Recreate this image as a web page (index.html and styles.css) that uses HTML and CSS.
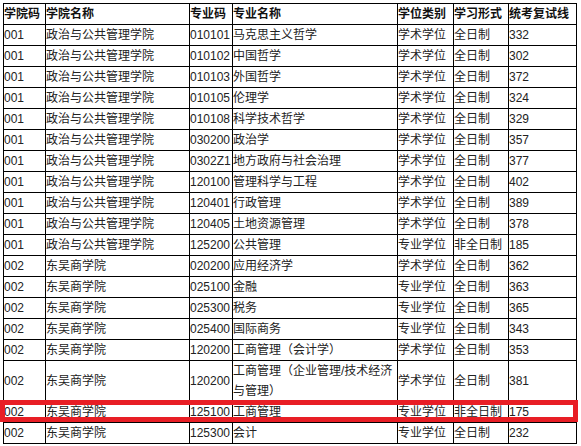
FILE: index.html
```html
<!DOCTYPE html>
<html lang="zh-CN">
<head>
<meta charset="utf-8">
<title>复试线</title>
<link rel="stylesheet" href="styles.css">
</head>
<body>
<div class="sheet">
<table class="grid">
<thead>
<tr>
<th class="c1">学院码</th><th class="c2">学院名称</th><th class="c3">专业码</th><th class="c4">专业名称</th><th class="c5">学位类别</th><th class="c6">学习形式</th><th class="c7">统考复试线</th>
</tr>
</thead>
<tbody>
<tr><td>001</td><td>政治与公共管理学院</td><td>010101</td><td>马克思主义哲学</td><td>学术学位</td><td>全日制</td><td>332</td></tr>
<tr><td>001</td><td>政治与公共管理学院</td><td>010102</td><td>中国哲学</td><td>学术学位</td><td>全日制</td><td>302</td></tr>
<tr><td>001</td><td>政治与公共管理学院</td><td>010103</td><td>外国哲学</td><td>学术学位</td><td>全日制</td><td>372</td></tr>
<tr><td>001</td><td>政治与公共管理学院</td><td>010105</td><td>伦理学</td><td>学术学位</td><td>全日制</td><td>324</td></tr>
<tr><td>001</td><td>政治与公共管理学院</td><td>010108</td><td>科学技术哲学</td><td>学术学位</td><td>全日制</td><td>329</td></tr>
<tr><td>001</td><td>政治与公共管理学院</td><td>030200</td><td>政治学</td><td>学术学位</td><td>全日制</td><td>357</td></tr>
<tr><td>001</td><td>政治与公共管理学院</td><td>0302Z1</td><td>地方政府与社会治理</td><td>学术学位</td><td>全日制</td><td>377</td></tr>
<tr><td>001</td><td>政治与公共管理学院</td><td>120100</td><td>管理科学与工程</td><td>学术学位</td><td>全日制</td><td>402</td></tr>
<tr><td>001</td><td>政治与公共管理学院</td><td>120401</td><td>行政管理</td><td>学术学位</td><td>全日制</td><td>389</td></tr>
<tr><td>001</td><td>政治与公共管理学院</td><td>120405</td><td>土地资源管理</td><td>学术学位</td><td>全日制</td><td>378</td></tr>
<tr><td>001</td><td>政治与公共管理学院</td><td>125200</td><td>公共管理</td><td>专业学位</td><td>非全日制</td><td>185</td></tr>
<tr><td>002</td><td>东吴商学院</td><td>020200</td><td>应用经济学</td><td>学术学位</td><td>全日制</td><td>362</td></tr>
<tr><td>002</td><td>东吴商学院</td><td>025100</td><td>金融</td><td>专业学位</td><td>全日制</td><td>363</td></tr>
<tr><td>002</td><td>东吴商学院</td><td>025300</td><td>税务</td><td>专业学位</td><td>全日制</td><td>365</td></tr>
<tr><td>002</td><td>东吴商学院</td><td>025400</td><td>国际商务</td><td>专业学位</td><td>全日制</td><td>343</td></tr>
<tr><td>002</td><td>东吴商学院</td><td>120200</td><td>工商管理（会计学）</td><td>学术学位</td><td>全日制</td><td>353</td></tr>
<tr><td>002</td><td>东吴商学院</td><td>120200</td><td>工商管理（企业管理/技术经济与管理）</td><td>学术学位</td><td>全日制</td><td>381</td></tr>
<tr><td>002</td><td>东吴商学院</td><td>125100</td><td>工商管理</td><td>专业学位</td><td>非全日制</td><td>175</td></tr>
<tr><td>002</td><td>东吴商学院</td><td>125300</td><td>会计</td><td>专业学位</td><td>全日制</td><td>232</td></tr>
</tbody>
</table>
<div class="highlight"></div>
</div>
</body>
</html>
```
FILE: styles.css
```css
html, body {
  margin: 0;
  padding: 0;
  background: #ffffff;
}

.sheet {
  position: relative;
  width: 581px;
  height: 446px;
  overflow: hidden;
  padding: 3px 0 0 3px;
  box-sizing: border-box;
}

.grid {
  border-collapse: separate;
  border-spacing: 0;
  table-layout: fixed;
  width: 574px;
  border-left: 1px solid #000;
  border-top: 1px solid #000;
  font-family: "Liberation Sans", "Noto Sans CJK SC", sans-serif;
  font-size: 12px;
  line-height: 20px;
  color: #222;
}

.grid th,
.grid td {
  box-sizing: border-box;
  border-right: 1px solid #000;
  border-bottom: 1px solid #000;
  padding: 0;
  text-align: left;
  vertical-align: middle;
  white-space: normal;
  word-break: break-all;
}

.grid th {
  font-weight: bold;
  color: #111;
}

.c1 { width: 42px; }
.c2 { width: 144px; }
.c3 { width: 43px; }
.c4 { width: 165px; }
.c5 { width: 56px; }
.c6 { width: 55px; }
.c7 { width: 68px; }

.highlight {
  position: absolute;
  left: 0;
  top: 400px;
  width: 578px;
  height: 22px;
  box-sizing: border-box;
  border: 5px solid #e81e25;
}
```
